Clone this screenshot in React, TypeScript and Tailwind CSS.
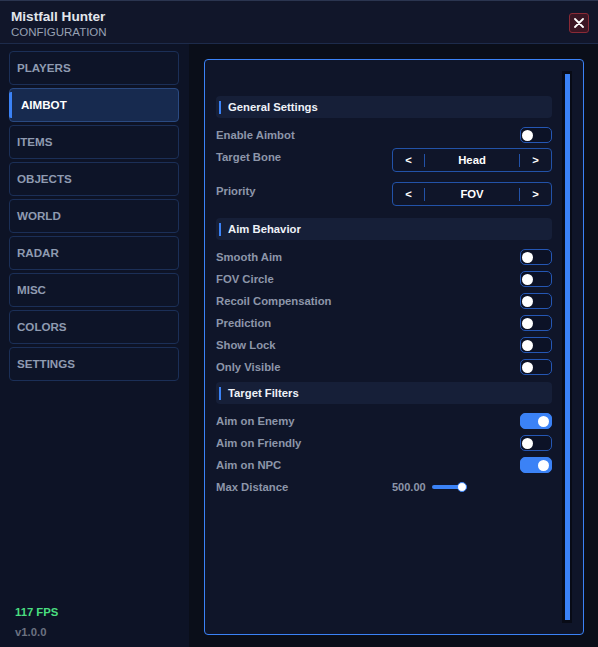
import React from 'react';

const tabs = ['PLAYERS', 'AIMBOT', 'ITEMS', 'OBJECTS', 'WORLD', 'RADAR', 'MISC', 'COLORS', 'SETTINGS'];

function Toggle({ on }: { on?: boolean }) {
  return (
    <div
      className={
        on
          ? 'flex h-[16px] w-[32px] items-center justify-end rounded-[5px] border border-[#3b82f6] bg-[#3b82f6] pr-[2px]'
          : 'flex h-[16px] w-[32px] items-center rounded-[5px] border border-[#2557b4] bg-[#0c1226] pl-[1px]'
      }
    >
      <div className="h-[11px] w-[11px] rounded-full bg-white" />
    </div>
  );
}

function SectionHeader({ title, className = '' }: { title: string; className?: string }) {
  return (
    <div className={`flex h-[22px] items-center rounded-[4px] bg-[#161f38] pl-[3px] ${className}`}>
      <div className="h-[13px] w-[2px] bg-[#3b82f6]" />
      <span className="ml-[7px] text-[11.3px] font-bold text-[#eef2f8]">{title}</span>
    </div>
  );
}

function ToggleRow({ label, on }: { label: string; on?: boolean }) {
  return (
    <div className="flex h-[22px] items-center justify-between">
      <span className="text-[11.3px] font-bold leading-[13px] text-[#8d96a9]">{label}</span>
      <Toggle on={on} />
    </div>
  );
}

function SelectRow({ label, value }: { label: string; value: string }) {
  return (
    <div className="flex h-[34px] items-start justify-between">
      <span className="pt-[3px] text-[11.3px] font-bold leading-[13px] text-[#8d96a9]">{label}</span>
      <div className="flex h-[24px] w-[160px] items-center rounded-[4px] border border-[#2252a8] text-[11.3px] font-bold text-white">
        <span className="w-[31px] text-center">&lt;</span>
        <div className="h-[13px] w-px bg-[#2252a8]" />
        <span className="flex-1 text-center">{value}</span>
        <div className="h-[13px] w-px bg-[#2252a8]" />
        <span className="w-[31px] text-center">&gt;</span>
      </div>
    </div>
  );
}

export default function App() {
  return (
    <div
      className="flex h-[647px] w-[598px] flex-col overflow-hidden border-t border-[#2b3550] bg-[#0a0e19]"
      style={{ fontFamily: '"Liberation Sans", Arial, sans-serif' }}
    >
      {/* title bar */}
      <header className="flex h-[43px] shrink-0 items-center justify-between border-b border-[#1d2b4b] bg-[#11162a] pl-[11px] pr-[9px] pt-[3px]">
        <div className="flex flex-col pt-[1px]">
          <span className="text-[13.6px] font-bold leading-[16px] text-[#e3e6ec]">Mistfall Hunter</span>
          <span className="text-[11.5px] leading-[15px] text-[#98a1b3]">CONFIGURATION</span>
        </div>
        <button className="mb-[1px] flex h-[20px] w-[20px] items-center justify-center rounded-[3px] border border-[#8a2a36] bg-[#3a1624]">
          <svg width="10" height="10" viewBox="0 0 10 10">
            <path d="M1 1L9 9M9 1L1 9" stroke="#ffffff" strokeWidth="1.8" strokeLinecap="round" />
          </svg>
        </button>
      </header>

      <div className="flex flex-1">
        {/* sidebar */}
        <aside className="flex w-[189px] flex-col bg-[#0d1326] pl-[9px] pr-[10px] pt-[7px]">
          <nav className="flex flex-col gap-[3px]">
            {tabs.map((t) =>
              t === 'AIMBOT' ? (
                <div
                  key={t}
                  className="relative flex h-[34px] items-center rounded-[4px] border border-[#2a4a82] bg-[#172a4f] pl-[11px]"
                >
                  <div className="absolute left-[-1px] top-[3px] h-[26px] w-[3px] rounded-l-[2px] bg-[#3b82f6]" />
                  <span className="text-[11.6px] font-bold text-white">{t}</span>
                </div>
              ) : (
                <div
                  key={t}
                  className="flex h-[34px] items-center rounded-[4px] border border-[#1b2f57] bg-[#0d1428] pl-[7px]"
                >
                  <span className="text-[11.6px] font-bold text-[#8f9bb1]">{t}</span>
                </div>
              )
            )}
          </nav>
          <div className="mt-auto flex flex-col gap-[7px] pb-[8px] pl-[6px]">
            <span className="text-[11.3px] font-bold leading-[13px] text-[#4ade80]">117 FPS</span>
            <span className="text-[11.3px] font-bold leading-[13px] text-[#6b7180]">v1.0.0</span>
          </div>
        </aside>

        {/* settings panel */}
        <main className="flex flex-1 bg-[#0a0e19] pb-[12px] pl-[15px] pr-[14px] pt-[15px]">
          <div className="flex flex-1 rounded-[4px] border border-[#3b82f6] bg-[#0f1529] pl-[11px] pr-[11px]">
            <div className="flex flex-1 flex-col pt-[36px]">
              <SectionHeader title="General Settings" className="mb-[6px]" />
              <ToggleRow label="Enable Aimbot" />
              <div className="h-[2px]" />
              <SelectRow label="Target Bone" value="Head" />
              <SelectRow label="Priority" value="FOV" />

              <SectionHeader title="Aim Behavior" className="mb-[6px] mt-[2px]" />
              <ToggleRow label="Smooth Aim" />
              <ToggleRow label="FOV Circle" />
              <ToggleRow label="Recoil Compensation" />
              <ToggleRow label="Prediction" />
              <ToggleRow label="Show Lock" />
              <ToggleRow label="Only Visible" />

              <SectionHeader title="Target Filters" className="mb-[6px] mt-[4px]" />
              <ToggleRow label="Aim on Enemy" on />
              <ToggleRow label="Aim on Friendly" />
              <ToggleRow label="Aim on NPC" on />
              <div className="flex h-[22px] items-center">
                <span className="w-[176px] text-[11.3px] font-bold text-[#8d96a9]">Max Distance</span>
                <span className="w-[32px] text-right text-[11px] font-bold text-[#8d96a9]">500.00</span>
                <div className="relative ml-[8px] flex h-[10px] w-[35px] items-center">
                  <div className="h-[4px] w-[30px] rounded-full bg-[#3b82f6]" />
                  <div className="absolute left-[25px] top-0 h-[10px] w-[10px] rounded-full border border-[#3b82f6] bg-white" />
                </div>
              </div>
            </div>

            {/* scrollbar */}
            <div className="my-[11px] ml-[10px] flex w-[10px] justify-center bg-[#080b16] py-[3px]">
              <div className="w-[5px] bg-[#3b82f6]" />
            </div>
          </div>
        </main>
      </div>
    </div>
  );
}
